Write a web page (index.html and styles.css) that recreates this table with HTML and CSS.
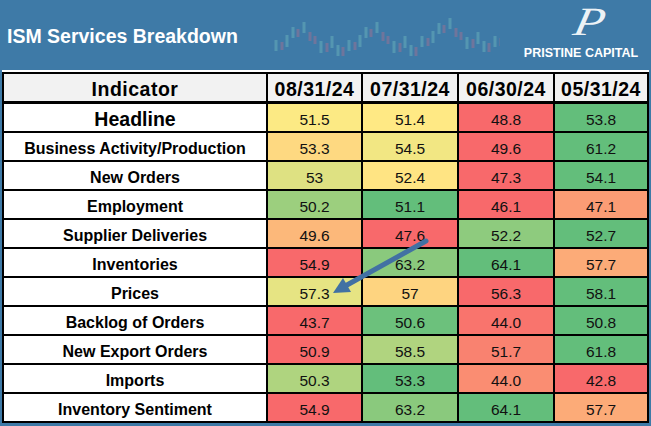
FILE: index.html
```html
<!DOCTYPE html>
<html>
<head>
<meta charset="utf-8">
<link rel="stylesheet" href="styles.css">
</head>
<body>
<div class="page">
  <header class="banner">
    <h1 class="title">ISM Services Breakdown</h1>
    <svg class="candles" width="232" height="70" viewBox="0 0 232 70">
      <defs>
        <g id="cp">
          <rect class="up" x="6.5" y="40" width="3" height="11"/>
          <rect class="dn" x="12.5" y="42" width="3" height="8"/>
          <rect class="up" x="17.5" y="35" width="3" height="12"/>
          <rect class="up" x="23.5" y="27" width="3" height="11"/>
          <rect class="dn" x="28.5" y="29" width="3" height="8"/>
          <rect class="up" x="34.5" y="22" width="3" height="11"/>
          <rect class="dn" x="40.5" y="32" width="3" height="9"/>
          <rect class="dn" x="45.5" y="36" width="3" height="8"/>
          <rect class="up" x="51.5" y="41" width="3" height="12"/>
          <rect class="dn" x="57.5" y="43" width="3" height="9"/>
          <rect class="up" x="62.5" y="36" width="3" height="12"/>
          <rect class="up" x="68.5" y="45" width="3" height="11"/>
          <rect class="dn" x="73.5" y="47" width="3" height="9"/>
        </g>
      </defs>
      <use href="#cp"/>
      <use href="#cp" x="73"/>
      <use href="#cp" x="146" y="-4"/>
      <use href="#cp" x="219" y="-4"/>
    </svg>
    <div class="logo">
      <span class="logo-mark">P</span>
      <span class="logo-name">PRISTINE CAPITAL</span>
    </div>
  </header>

  <div class="table-frame">
    <div class="grid">
      <div class="cell hd">Indicator</div>
      <div class="cell hd">08/31/24</div>
      <div class="cell hd">07/31/24</div>
      <div class="cell hd">06/30/24</div>
      <div class="cell hd">05/31/24</div>

      <div class="cell label big">Headline</div>
      <div class="cell val" style="background:rgb(252,234,132)">51.5</div>
      <div class="cell val" style="background:rgb(255,233,132)">51.4</div>
      <div class="cell val" style="background:rgb(248,105,107)">48.8</div>
      <div class="cell val" style="background:rgb(99,190,123)">53.8</div>

      <div class="cell label">Business Activity/Production</div>
      <div class="cell val" style="background:rgb(254,217,129)">53.3</div>
      <div class="cell val" style="background:rgb(242,231,131)">54.5</div>
      <div class="cell val" style="background:rgb(248,105,107)">49.6</div>
      <div class="cell val" style="background:rgb(99,190,123)">61.2</div>

      <div class="cell label">New Orders</div>
      <div class="cell val" style="background:rgb(222,225,130)">53</div>
      <div class="cell val" style="background:rgb(255,228,131)">52.4</div>
      <div class="cell val" style="background:rgb(248,105,107)">47.3</div>
      <div class="cell val" style="background:rgb(99,190,123)">54.1</div>

      <div class="cell label">Employment</div>
      <div class="cell val" style="background:rgb(156,207,126)">50.2</div>
      <div class="cell val" style="background:rgb(99,190,123)">51.1</div>
      <div class="cell val" style="background:rgb(248,105,107)">46.1</div>
      <div class="cell val" style="background:rgb(251,156,117)">47.1</div>

      <div class="cell label">Supplier Deliveries</div>
      <div class="cell val" style="background:rgb(252,184,122)">49.6</div>
      <div class="cell val" style="background:rgb(248,105,107)">47.6</div>
      <div class="cell val" style="background:rgb(142,203,126)">52.2</div>
      <div class="cell val" style="background:rgb(99,190,123)">52.7</div>

      <div class="cell label">Inventories</div>
      <div class="cell val" style="background:rgb(248,105,107)">54.9</div>
      <div class="cell val" style="background:rgb(138,201,125)">63.2</div>
      <div class="cell val" style="background:rgb(99,190,123)">64.1</div>
      <div class="cell val" style="background:rgb(252,171,120)">57.7</div>

      <div class="cell label">Prices</div>
      <div class="cell val" style="background:rgb(230,228,131)">57.3</div>
      <div class="cell val" style="background:rgb(254,212,128)">57</div>
      <div class="cell val" style="background:rgb(248,105,107)">56.3</div>
      <div class="cell val" style="background:rgb(99,190,123)">58.1</div>

      <div class="cell label">Backlog of Orders</div>
      <div class="cell val" style="background:rgb(248,105,107)">43.7</div>
      <div class="cell val" style="background:rgb(108,193,124)">50.6</div>
      <div class="cell val" style="background:rgb(249,116,109)">44.0</div>
      <div class="cell val" style="background:rgb(99,190,123)">50.8</div>

      <div class="cell label">New Export Orders</div>
      <div class="cell val" style="background:rgb(248,105,107)">50.9</div>
      <div class="cell val" style="background:rgb(176,212,127)">58.5</div>
      <div class="cell val" style="background:rgb(249,130,112)">51.7</div>
      <div class="cell val" style="background:rgb(99,190,123)">61.8</div>

      <div class="cell label">Imports</div>
      <div class="cell val" style="background:rgb(175,212,127)">50.3</div>
      <div class="cell val" style="background:rgb(99,190,123)">53.3</div>
      <div class="cell val" style="background:rgb(250,141,114)">44.0</div>
      <div class="cell val" style="background:rgb(248,105,107)">42.8</div>

      <div class="cell label">Inventory Sentiment</div>
      <div class="cell val" style="background:rgb(248,105,107)">54.9</div>
      <div class="cell val" style="background:rgb(138,201,125)">63.2</div>
      <div class="cell val" style="background:rgb(99,190,123)">64.1</div>
      <div class="cell val" style="background:rgb(252,171,120)">57.7</div>
    </div>
  </div>

  <svg class="arrow" width="651" height="426" viewBox="0 0 651 426">
    <line x1="426" y1="241" x2="347" y2="285" stroke="#4271a3" stroke-width="5" stroke-linecap="round"/>
    <polygon points="333,293 343,278 351,292" fill="#4271a3"/>
  </svg>
</div>
</body>
</html>
```

FILE: styles.css
```css
html, body {
  margin: 0;
  padding: 0;
}

body {
  width: 651px;
  height: 426px;
  overflow: hidden;
  background: #3e7aa7;
  font-family: "Liberation Sans", Arial, sans-serif;
  color: #000;
}

.page {
  position: relative;
  width: 651px;
  height: 426px;
}

.banner {
  display: grid;
  grid-template-columns: 268px 232px 1fr;
  height: 70px;
}

.title {
  margin: 0;
  padding: 3px 0 0 7px;
  align-self: center;
  font-size: 19.5px;
  font-weight: bold;
  color: #fff;
  white-space: nowrap;
}

.candles {
  display: block;
}

.candles .up {
  fill: rgba(130, 212, 200, 0.32);
}

.candles .dn {
  fill: rgba(215, 110, 135, 0.32);
}

.logo {
  display: flex;
  flex-direction: column;
  align-items: center;
  padding: 7px 6px 0 17px;
}

.logo-mark {
  display: block;
  height: 29px;
  line-height: 29px;
  font-family: "Liberation Serif", "Times New Roman", serif;
  font-style: italic;
  font-size: 40px;
  color: rgba(255, 255, 255, 0.92);
  padding-left: 14px;
  transform: skewX(-12deg) scaleX(1.25);
}

.logo-name {
  display: block;
  margin-top: 10px;
  line-height: 14px;
  font-size: 12.5px;
  font-weight: bold;
  color: #fff;
  white-space: nowrap;
}

.table-frame {
  margin: 0 2px;
  border-top: 2px solid #fff;
}

.grid {
  display: grid;
  grid-template-columns: 262px 93px 94px 94px 92px;
  grid-template-rows: 28px repeat(11, 27px);
  gap: 2px;
  padding: 2px;
  background: #000;
  width: max-content;
}

.cell {
  display: flex;
  align-items: center;
  justify-content: center;
  padding-top: 4px;
  background: #fff;
  white-space: nowrap;
}

.hd {
  background: #f2f2f2;
  font-weight: bold;
  font-size: 19.5px;
  letter-spacing: 0.5px;
  margin-bottom: 1px;
}

.label {
  font-weight: bold;
  font-size: 16px;
}

.label.big {
  font-size: 19.5px;
}

.val {
  font-size: 15.5px;
  color: #111;
}

.arrow {
  position: absolute;
  left: 0;
  top: 0;
  pointer-events: none;
}
```
